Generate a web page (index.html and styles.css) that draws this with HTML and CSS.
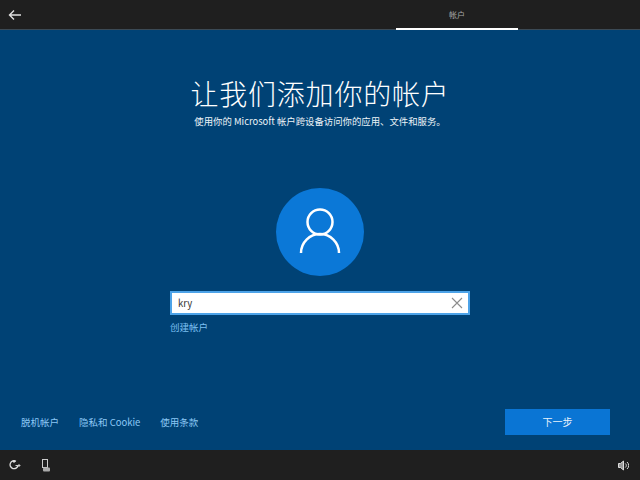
FILE: index.html
```html
<!DOCTYPE html>
<html>

<head>
  <meta charset="utf-8">
  <title>让我们添加你的帐户</title>
  <link rel="stylesheet" href="styles.css">
</head>

<body>
  <div class="topbar">
    <svg class="back" width="14" height="12" viewBox="0 0 14 12">
      <path d="M13 6H1.500M6 1.500L1.500 6 6 10.500" fill="none" stroke="#e0e0e0" stroke-width="1.400"/>
    </svg>
    <div class="tab">帐户</div>
  </div>

  <div class="main">
    <h1 class="title">让我们添加你的帐户</h1>
    <p class="sub">使用你的 Microsoft 帐户跨设备访问你的应用、文件和服务。</p>

    <div class="avatar">
      <svg width="48" height="48" viewBox="0 0 48 48">
        <circle cx="24" cy="14" r="12.500" fill="none" stroke="#fff" stroke-width="2.500"/>
        <path d="M5 45a19 19 0 0 1 38 0" fill="none" stroke="#fff" stroke-width="2.500"/>
      </svg>
    </div>

    <div class="field">
      <span class="value">kry</span>
      <svg width="12" height="12" viewBox="0 0 12 12">
        <path d="M1 1l10 10M11 1L1 11" stroke="#8c8c8c" stroke-width="1.100"/>
      </svg>
    </div>
    <div class="create">创建帐户</div>

    <div class="actions">
      <div class="links">
        <span>脱机帐户</span>
        <span>隐私和 Cookie</span>
        <span>使用条款</span>
      </div>
      <div class="next">下一步</div>
    </div>
  </div>

  <div class="bottombar">
    <div class="tools">
      <svg width="13" height="12" viewBox="0 0 13 12">
        <path d="M7 2.200A4 4 0 1 0 9 6.500" fill="none" stroke="#ddd" stroke-width="1.300"/>
        <path d="M5 1v3M3.500 2.500h3" fill="none" stroke="#ddd" stroke-width="1"/>
        <path d="M6.500 6.500h4.500M9.500 5l1.500 1.500-1.500 1.500" fill="none" stroke="#ccc" stroke-width="1"/>
      </svg>
      <svg width="12" height="13" viewBox="0 0 12 13">
        <rect x="2.500" y=".5" width="5" height="8" fill="none" stroke="#ccc"/>
        <rect x="3" y="8.500" width="7" height="4" rx="1" fill="#aaa"/>
      </svg>
    </div>
    <svg width="11" height="11" viewBox="0 0 11 11">
      <path d="M.5 3.500h2L5.500 1v9L2.500 7.500h-2z" fill="#999" stroke="#ddd"/>
      <path d="M7.300 3.500a2.500 2.500 0 0 1 0 4M9 2a4.500 4.500 0 0 1 0 7" fill="none" stroke="#ddd"/>
    </svg>
  </div>
</body>

</html>
```

FILE: styles.css
```css
* {
  box-sizing: border-box;
}

html,
body {
  margin: 0;
  height: 100%;
}

body {
  width: 640px;
  height: 480px;
  display: flex;
  flex-direction: column;
  overflow: hidden;
  background: #004275;
  font-family: "Noto Sans CJK SC", "Liberation Sans", sans-serif;
}

.topbar {
  height: 30px;
  flex: none;
  display: flex;
  background: #1f1f1f;
  border-bottom: 1px solid #3c4a55;
}

.back {
  margin: 9px 0 0 8px;
}

.tab {
  width: 122px;
  margin-left: 374px;
  height: 30px;
  padding-top: 9px;
  border-bottom: 2px solid #fff;
  text-align: center;
  font-size: 8px;
  line-height: 12px;
  color: #a8a8a8;
}

.main {
  flex: 1;
  min-height: 0;
  display: flex;
  flex-direction: column;
  align-items: center;
}

.title {
  margin: 43px 0 0;
  font-size: 28px;
  line-height: 40px;
  font-weight: 300;
  color: #fff;
  letter-spacing: 0.8px;
}

.sub {
  margin: 1px 0 0;
  font-size: 9.400px;
  line-height: 14px;
  color: #eef4f8;
}

.avatar {
  width: 88px;
  height: 88px;
  margin-top: 60px;
  display: flex;
  align-items: center;
  justify-content: center;
  border-radius: 50%;
  background: #0b78d7;
}

.field {
  width: 300px;
  height: 24px;
  margin-top: 15px;
  padding: 0 5px 0 6px;
  display: flex;
  align-items: center;
  justify-content: space-between;
  background: #fff;
  border: 2px solid #4da3e8;
}

.value {
  font-size: 9.500px;
  color: #333;
}

.create {
  width: 300px;
  margin-top: 5px;
  font-size: 9.500px;
  line-height: 14px;
  color: #7cc0f2;
}

.actions {
  width: 100%;
  margin-top: 75px;
  padding: 0 30px 0 21px;
  display: flex;
  align-items: center;
  justify-content: space-between;
}

.links {
  display: flex;
  gap: 20px;
  font-size: 9.500px;
  line-height: 14px;
  color: #8cc8f5;
}

.next {
  width: 105px;
  height: 26px;
  text-align: center;
  font-size: 10px;
  line-height: 26px;
  color: #e8f3fc;
  background: #0a75d4;
}

.bottombar {
  height: 30px;
  flex: none;
  padding: 0 11px 0 9px;
  display: flex;
  align-items: center;
  justify-content: space-between;
  background: #1f1f1f;
}

.tools {
  display: flex;
  gap: 18px;
}
```
